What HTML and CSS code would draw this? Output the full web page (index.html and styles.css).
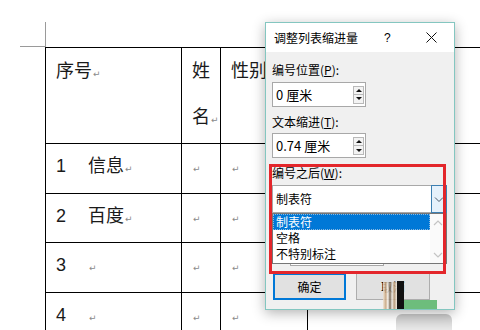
FILE: index.html
```html
<!DOCTYPE html>
<html>
<head>
<meta charset="utf-8">
<link rel="stylesheet" href="styles.css">
</head>
<body>
<div class="page">
  <div class="crop"></div>
  <table class="doc">
    <colgroup><col class="c1"><col class="c2"><col class="c3"><col class="c4"></colgroup>
    <tr class="head">
      <td>序号<span class="pm">↵</span></td>
      <td>姓<br>名<span class="pm">↵</span></td>
      <td class="under-dialog">性别<span class="pm">↵</span></td>
      <td></td>
    </tr>
    <tr>
      <td><span class="num">1</span>信息<span class="pm">↵</span></td>
      <td><span class="pm">↵</span></td>
      <td><span class="pm">↵</span></td>
      <td></td>
    </tr>
    <tr>
      <td><span class="num">2</span>百度<span class="pm">↵</span></td>
      <td><span class="pm">↵</span></td>
      <td><span class="pm">↵</span></td>
      <td></td>
    </tr>
    <tr>
      <td><span class="num">3</span><span class="pm">↵</span></td>
      <td><span class="pm">↵</span></td>
      <td><span class="pm">↵</span></td>
      <td></td>
    </tr>
    <tr>
      <td><span class="num">4</span><span class="pm">↵</span></td>
      <td><span class="pm">↵</span></td>
      <td><span class="pm">↵</span></td>
      <td></td>
    </tr>
    <tr class="last">
      <td></td><td></td><td></td><td></td>
    </tr>
  </table>
</div>

<div class="blob"></div>

<div class="dialog">
  <div class="titlebar">
    <span class="title">调整列表缩进量</span>
    <span class="help">?</span>
    <svg class="close" width="11" height="11" viewBox="0 0 11 11"><path d="M0.5 0.5 L10.5 10.5 M10.5 0.5 L0.5 10.5" stroke="#111" stroke-width="1" fill="none"/></svg>
  </div>
  <div class="dbody">
    <div class="lbl">编号位置(<u>P</u>):</div>
    <div class="spin">
      <span class="val">0 厘米</span>
      <div class="arrows"><div class="ab"><span class="tri-up"></span></div><div class="ab"><span class="tri-down"></span></div></div>
    </div>
    <div class="lbl">文本缩进(<u>T</u>):</div>
    <div class="spin">
      <span class="val">0.74 厘米</span>
      <div class="arrows"><div class="ab"><span class="tri-up"></span></div><div class="ab"><span class="tri-down"></span></div></div>
    </div>
    <div class="lbl">编号之后(<u>W</u>):</div>
    <div class="combo">
      <span class="ctext">制表符</span>
      <div class="dd-btn"><svg width="14" height="14" viewBox="0 0 14 14"><path d="M3 5.5 L7 9.5 L11 5.5" stroke="#4a5a6a" stroke-width="1" fill="none"/></svg></div>
      <div class="dd-list">
        <div class="opt sel">制表符</div>
        <div class="opt">空格</div>
        <div class="opt">不特别标注</div>
        <div class="sb">
          <svg width="14" height="12" viewBox="0 0 14 12"><path d="M3 8 L7 4 L11 8" stroke="#c4c4c4" stroke-width="1.2" fill="none"/></svg>
          <svg width="14" height="12" viewBox="0 0 14 12"><path d="M3 4 L7 8 L11 4" stroke="#c4c4c4" stroke-width="1.2" fill="none"/></svg>
        </div>
      </div>
    </div>
    <div class="under"></div>
    <div class="buttons">
      <button class="btn default">确定</button>
      <button class="btn">取消</button>
    </div>
  </div>
  <div class="mark"></div>
  <div class="glitch stripes"></div>
  <div class="glitch black"></div>
  <div class="glitch green"></div>
</div>
</body>
</html>
```

FILE: styles.css
```css
html, body {
  margin: 0;
  padding: 0;
}
body {
  width: 480px;
  height: 330px;
  overflow: hidden;
  background: #fff;
  position: relative;
  font-family: "Noto Sans CJK SC", sans-serif;
}

.page {
  padding-top: 22px;
}
.crop {
  margin-left: 20px;
  width: 25px;
  height: 24px;
  border-right: 1px solid #9a9a9a;
  border-bottom: 1px solid #9a9a9a;
}

table.doc {
  border-collapse: collapse;
  table-layout: fixed;
  width: 600px;
  margin-left: 45px;
}
.c1 { width: 136px; }
.c2 { width: 39px; }
.c3 { width: 87px; }
.c4 { width: 338px; }

table.doc td {
  border: 1px solid #000;
  padding: 0 0 0 10px;
  vertical-align: top;
  font-size: 18px;
  line-height: 45.5px;
  color: #1a1a1a;
  white-space: nowrap;
  overflow: hidden;
  font-family: "Liberation Sans", "Noto Sans CJK SC", sans-serif;
}
table.doc tr.head td {
  line-height: 46px;
}
table.doc td.under-dialog {
  padding-right: 0;
}
.num {
  display: inline-block;
  width: 32px;
}
.pm {
  font-family: "DejaVu Sans", sans-serif;
  font-size: 9px;
  color: #8a8a8a;
  margin-left: 1px;
}

.blob {
  position: absolute;
  left: 396px;
  top: 314px;
  width: 56px;
  height: 16px;
  border-radius: 6px 6px 0 0;
  background: linear-gradient(#c8c8c8, #e8e8e8);
}

.dialog {
  position: absolute;
  left: 265px;
  top: 22px;
  width: 190px;
  height: 288px;
  box-sizing: border-box;
  border: 1px solid #84c6c0;
  background: #f0f0f0;
  box-shadow: 0 3px 12px rgba(0, 0, 0, 0.3);
  font-size: 12px;
  color: #000;
}
.titlebar {
  height: 29px;
  background: #fff;
  display: flex;
  align-items: center;
  padding-left: 8px;
}
.title {
  width: 84px;
  white-space: nowrap;
  font-size: 12px;
}
.help {
  margin-left: 26px;
  font-size: 12px;
  font-family: "Liberation Sans", sans-serif;
}
.close {
  margin-left: 35px;
}

.dbody {
  padding: 10px 7px 0 6px;
}
.lbl {
  line-height: 16px;
  margin-bottom: 3.5px;
  white-space: nowrap;
}
.lbl u {
  text-underline-offset: 1px;
}
.spin {
  position: relative;
  width: 94px;
  height: 25px;
  box-sizing: border-box;
  border: 1px solid #a8a8a8;
  background: #fff;
  display: flex;
  align-items: center;
  margin-bottom: 7px;
}
.val {
  padding-left: 3px;
  font-size: 13px;
  white-space: nowrap;
}
.arrows {
  position: absolute;
  right: 1px;
  top: 3px;
  width: 11px;
  display: flex;
  flex-direction: column;
}
.ab {
  height: 9px;
  box-sizing: border-box;
  border: 1px solid #b9b9b9;
  background: #f3f3f3;
  display: flex;
  align-items: center;
  justify-content: center;
}
.ab + .ab {
  margin-top: -1px;
  height: 10px;
}
.tri-up {
  width: 0;
  height: 0;
  border-left: 3px solid transparent;
  border-right: 3px solid transparent;
  border-bottom: 3px solid #111;
}
.tri-down {
  width: 0;
  height: 0;
  border-left: 3px solid transparent;
  border-right: 3px solid transparent;
  border-top: 3px solid #111;
}

.combo {
  position: relative;
  height: 28px;
  box-sizing: border-box;
  border: 1px solid #a8a8a8;
  background: #fff;
  display: flex;
  align-items: center;
}
.ctext {
  padding-left: 3px;
}
.dd-btn {
  position: absolute;
  right: -1px;
  top: -1px;
  bottom: -1px;
  width: 16px;
  box-sizing: border-box;
  border: 1px solid #3c7fb1;
  background: #e5f1fb;
  display: flex;
  align-items: center;
  justify-content: center;
}
.dd-list {
  position: absolute;
  left: -1px;
  right: -1px;
  top: 27px;
  height: 51px;
  box-sizing: border-box;
  border: 1px solid #767676;
  background: #fff;
  padding-right: 16px;
  z-index: 2;
}
.opt {
  height: 16.3px;
  line-height: 16.3px;
  padding-left: 3px;
  white-space: nowrap;
}
.opt.sel {
  background: #0078d7;
  color: #fff;
  outline: 1px dotted #8ab8e0;
  outline-offset: -1px;
}
.sb {
  position: absolute;
  right: 0;
  top: 0;
  bottom: 0;
  width: 16px;
  background: #fafafa;
  display: flex;
  flex-direction: column;
  justify-content: space-between;
  align-items: center;
  padding: 3px 0 2px;
  box-sizing: border-box;
}

.under {
  margin: 28px 0 0 18px;
  width: 94px;
  height: 25px;
  box-sizing: border-box;
  border: 1px solid #a8a8a8;
  background: #fff;
}
.buttons {
  display: flex;
  gap: 10px;
  margin: 7px 0 0 1px;
}
.btn {
  width: 74px;
  height: 27px;
  box-sizing: border-box;
  border: 1px solid #adadad;
  background: #e1e1e1;
  font-family: "Noto Sans CJK SC", sans-serif;
  font-size: 12px;
  color: #000;
  padding: 0;
}
.btn.default {
  width: 73px;
  border: 2px solid #0078d7;
}

.mark {
  position: absolute;
  left: 3px;
  top: 141px;
  width: 177px;
  height: 110px;
  box-sizing: border-box;
  border: 3px solid #e3262b;
  z-index: 3;
}

.glitch {
  position: absolute;
  z-index: 4;
}
.stripes {
  left: 117px;
  top: 259px;
  width: 14px;
  height: 27px;
  opacity: 0.85;
  background: linear-gradient(90deg, #efe4d2 0%, #c6a27a 20%, #fbf8f2 35%, #6b5842 50%, #f1ede6 65%, #b1916c 80%, #f4eee4 100%);
}
.black {
  left: 131px;
  top: 258px;
  width: 7px;
  height: 28px;
  background: #111;
}
.green {
  left: 138px;
  top: 277px;
  width: 33px;
  height: 9px;
  background: #6dbd7c;
}
```
